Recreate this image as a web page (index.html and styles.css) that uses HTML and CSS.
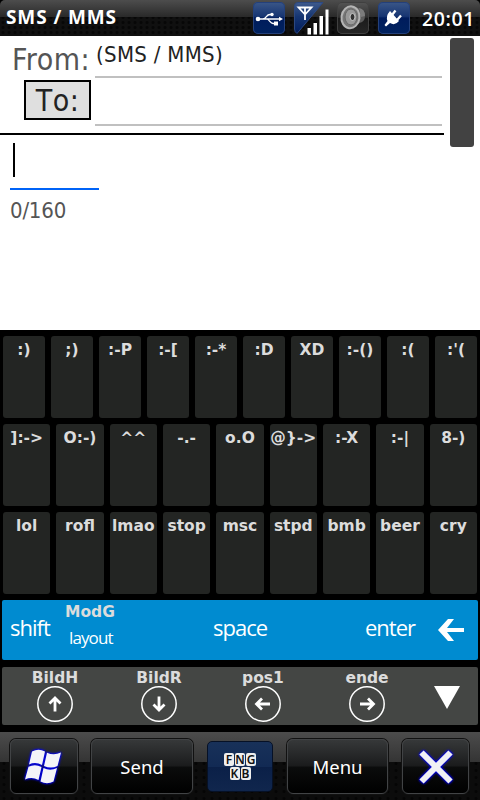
FILE: index.html
```html
<!DOCTYPE html>
<html lang="en">
<head>
  <meta charset="utf-8">
  <title>SMS / MMS</title>
  <link rel="stylesheet" href="styles.css">
</head>
<body>
  <header class="status">
    <h1>SMS / MMS</h1>
    <div class="tray">
      <div class="tile">
        <svg width="32" height="32" viewBox="0 0 32 32" fill="none" stroke="#fff" stroke-width="1.3">
          <path d="M4 17H27M10 17C14 16 13 12.500 17 12.500H20M14 17C17 18 17 21.500 20 21.500H22"/>
          <circle cx="5" cy="17" r="2.300" fill="#fff" stroke="none"/>
          <circle cx="19" cy="12.500" r="1.700" fill="#fff" stroke="none"/>
          <path d="M21 19.500h4v4h-4zM26 14.800l4 2.200-4 2.200z" fill="#fff" stroke="none"/>
        </svg>
      </div>
      <svg class="signal" width="36" height="34" viewBox="0 0 36 34">
        <defs>
          <linearGradient id="blue" x1="0" y1="0" x2="0" y2="1">
            <stop offset="0" stop-color="#3e5a8c"/>
            <stop offset=".45" stop-color="#163672"/>
            <stop offset="1" stop-color="#001c5c"/>
          </linearGradient>
        </defs>
        <path d="M4 .5H29L3 31.500Q.5 30 .5 27V4Q.5 .5 4 .5z" fill="url(#blue)" stroke="#2c4880"/>
        <path d="M4.500 5.500H17.500L11 12.500zM11 5V18" fill="none" stroke="#fff" stroke-width="1.800"/>
        <path d="M13.500 26h3.500v6.500h-3.500zM19.500 21h3.500v11.500h-3.500zM25.500 14h3.500v18.500h-3.500zM31.500 7.500h3v25h-3z" fill="#fff"/>
      </svg>
      <div class="tile gray">
        <svg width="32" height="32" viewBox="0 0 32 32">
          <path d="M14 4L22 6Q28 7 28 14Q28 20 22 21L15 26z" fill="#5c5c5c"/>
          <path d="M22 6Q28 7 28 14L24 15Z" fill="#7c7c7c"/>
          <ellipse cx="13.500" cy="15.300" rx="9" ry="11" transform="rotate(8 13.500 15.300)" fill="#777" stroke="#b4b4b4" stroke-width="2"/>
          <ellipse cx="14" cy="15" rx="6" ry="8" fill="#999" stroke="#666"/>
          <ellipse cx="15.500" cy="15" rx="2.500" ry="3.500" fill="#333" stroke="#ccc"/>
        </svg>
      </div>
      <div class="tile">
        <svg width="32" height="32" viewBox="0 0 32 32">
          <path d="M12 9L21 19Q17 24 12 21L8 24.500L6.500 23L9.500 19Q7.500 14 12 9z" fill="#fff"/>
          <path d="M14 13L17.500 8.500M19 18L23 13.500" stroke="#fff" stroke-width="2.300"/>
        </svg>
      </div>
    </div>
    <div class="clock">20:01</div>
  </header>

  <main class="compose">
    <div class="form">
      <div class="row">
        <span class="label">From:</span>
        <span class="field">(SMS / MMS)</span>
      </div>
      <div class="row to">
        <button class="to-btn">To:</button>
        <span class="field"></span>
      </div>
      <div class="message">
        <div class="caret"></div>
      </div>
      <div class="count">0/160</div>
    </div>
    <div class="scrollbar"></div>
  </main>

  <section class="keyboard">
    <div class="keys">
      <div class="key">:)</div>
      <div class="key">;)</div>
      <div class="key">:-P</div>
      <div class="key">:-[</div>
      <div class="key">:-*</div>
      <div class="key">:D</div>
      <div class="key">XD</div>
      <div class="key">:-()</div>
      <div class="key">:(</div>
      <div class="key">:'(</div>
    </div>
    <div class="keys">
      <div class="key">]:-&gt;</div>
      <div class="key">O:-)</div>
      <div class="key">^^</div>
      <div class="key">-.-</div>
      <div class="key">o.O</div>
      <div class="key">@}-&gt;</div>
      <div class="key">:-X</div>
      <div class="key">:-|</div>
      <div class="key">8-)</div>
    </div>
    <div class="keys">
      <div class="key">lol</div>
      <div class="key">rofl</div>
      <div class="key">lmao</div>
      <div class="key">stop</div>
      <div class="key">msc</div>
      <div class="key">stpd</div>
      <div class="key">bmb</div>
      <div class="key">beer</div>
      <div class="key">cry</div>
    </div>
    <div class="bar blue">
      <span class="shift">shift</span>
      <div class="mod">
        <b>ModG</b>
        <span>layout</span>
      </div>
      <span class="space">space</span>
      <span class="enter">enter</span>
      <svg class="back" width="26" height="22" viewBox="0 0 26 22">
        <path d="M10 0H16L9 9H26V13H9L16 22H10L0 11z" fill="#fff"/>
      </svg>
    </div>
    <div class="bar nav">
      <div class="nav-key">
        <b>BildH</b>
        <svg width="36" height="36" viewBox="0 0 36 36" fill="none" stroke="#fff"><circle cx="18" cy="18" r="17.200" stroke-width="1.500"/><path d="M18 25.500V12.500M12.500 17.500L18 12L23.500 17.500" stroke-width="2.800"/></svg>
      </div>
      <div class="nav-key">
        <b>BildR</b>
        <svg width="36" height="36" viewBox="0 0 36 36" fill="none" stroke="#fff"><circle cx="18" cy="18" r="17.200" stroke-width="1.500"/><path d="M18 10.500V23.500M12.500 18.500L18 24L23.500 18.500" stroke-width="2.800"/></svg>
      </div>
      <div class="nav-key">
        <b>pos1</b>
        <svg width="36" height="36" viewBox="0 0 36 36" fill="none" stroke="#fff"><circle cx="18" cy="18" r="17.200" stroke-width="1.500"/><path d="M25 18H12M17 12.500L11.500 18L17 23.500" stroke-width="2.800"/></svg>
      </div>
      <div class="nav-key">
        <b>ende</b>
        <svg width="36" height="36" viewBox="0 0 36 36" fill="none" stroke="#fff"><circle cx="18" cy="18" r="17.200" stroke-width="1.500"/><path d="M11 18H24M19 12.500L24.500 18L19 23.500" stroke-width="2.800"/></svg>
      </div>
      <svg class="hide" width="26" height="23" viewBox="0 0 26 23"><path d="M0 0H26L13 23z" fill="#fff"/></svg>
    </div>
  </section>

  <footer class="menubar">
    <button class="soft start">
      <svg width="48" height="44" viewBox="0 0 48 44">
        <path d="M12 6.500Q18.500 3 25 6.500L22 20Q15.500 16.500 9 19.500zM27 7.800Q34 11 41 7.500L37.500 21Q31 24 24 21zM8.500 21.800Q15 18.500 21.500 22L18.500 35Q12 31.500 5 34.500zM23.500 23Q30 26.500 37 23L33.500 36.500Q27 40 20.500 36.500z" fill="#f4f4f8"/>
      </svg>
    </button>
    <button class="soft send">Send</button>
    <button class="sip">
      <span><i>F</i><i>N</i><i>G</i></span>
      <span><i>K</i><i>B</i></span>
    </button>
    <button class="soft menu">Menu</button>
    <button class="soft close">
      <svg width="44" height="44" viewBox="0 0 44 44"><path d="M7.500 7.500L36.500 36.500M36.500 7.500L7.500 36.500" stroke="#f0f0f4" stroke-width="6"/></svg>
    </button>
  </footer>
</body>
</html>
```
FILE: styles.css
```css
* {
  box-sizing: border-box;
}
body {
  margin: 0;
  width: 480px;
  height: 800px;
  display: flex;
  flex-direction: column;
  background: #000;
  font-family: "DejaVu Sans Condensed", "DejaVu Sans", sans-serif;
  font-stretch: condensed;
  overflow: hidden;
}
svg {
  display: block;
}
button {
  margin: 0;
  padding: 0;
  font: inherit;
}

/* top bar */
.status {
  height: 36px;
  display: flex;
  align-items: flex-start;
  padding-left: 6px;
  color: #fff;
  font-family: "Open Sans", sans-serif;
  font-stretch: normal;
  background:
    linear-gradient(#4d4d4d, #292929 17px, transparent 17px),
    radial-gradient(circle, #070707 1px, #101010 2px) 0 0 / 6px 5px;
  border-radius: 5px 5px 0 0;
}
.status h1 {
  margin: 0;
  width: 247px;
  font-size: 19px;
  line-height: 35px;
  letter-spacing: 0.9px;
  font-weight: bold;
}
.tray {
  display: flex;
  gap: 9px;
  padding-top: 2px;
}
.tile {
  width: 32px;
  height: 32px;
  border-radius: 5px;
  background: linear-gradient(#3b5788, #173572 45%, #001c5c 50%, #00225f);
  box-shadow: inset 0 0 0 1px #24407a;
}
.tile.gray {
  background: linear-gradient(#565656, #303030 48%, #1b1b1b 50%, #262626);
  box-shadow: inset 0 0 0 1px #404040;
  margin-left: -2px;
}
.clock {
  margin-left: 12px;
  font-size: 19.5px;
  line-height: 37px;
  font-weight: 600;
  letter-spacing: 0.6px;
}

/* message form */
.compose {
  height: 294px;
  display: flex;
  background: #fff;
}
.form {
  width: 444px;
}
.row {
  display: flex;
  justify-content: space-between;
  height: 42px;
  padding: 0 2px 0 12px;
}
.row.to {
  height: 57px;
  padding-left: 24px;
  padding-top: 2px;
  border-bottom: 2px solid #000;
}
.label {
  font-size: 30px;
  line-height: 47px;
  letter-spacing: 0.5px;
  color: #555;
}
.field {
  width: 347px;
  padding-left: 1px;
  font-size: 22px;
  line-height: 38px;
  letter-spacing: 0.3px;
  color: #222;
  border-bottom: 2px solid #c0c0c0;
}
.to .field {
  height: 46px;
}
.to-btn {
  width: 67px;
  height: 40px;
  border: 2px solid #000;
  background: #dfdfdf;
  color: #222;
  font-size: 30px;
  line-height: 38px;
  letter-spacing: 0.5px;
  font-kerning: none;
}
.message {
  width: 89px;
  height: 55px;
  margin-left: 10px;
  padding: 8px 3px;
  border-bottom: 2px solid #0063f7;
}
.caret {
  width: 2px;
  height: 34px;
  background: #000;
}
.count {
  margin-left: 10px;
  font-size: 22px;
  line-height: 42px;
  letter-spacing: -0.2px;
  color: #555;
}
.scrollbar {
  width: 24px;
  height: 109px;
  margin: 2px 0 0 6px;
  border-radius: 3px;
  background: #424242;
}

/* keyboard */
.keyboard {
  height: 402px;
  padding: 6px 2px 0;
  color: #dcdcdc;
  font-family: "DejaVu Sans", sans-serif;
  font-stretch: normal;
  font-size: 15.5px;
  font-weight: bold;
}
.keys {
  display: flex;
  gap: 6px;
  height: 82px;
  margin: 0 1px 6px;
}
.key {
  flex: 1 1 0;
  min-width: 0;
  display: flex;
  justify-content: center;
  border-radius: 3px;
  background: #232523;
  line-height: 29px;
  white-space: nowrap;
}
.bar {
  display: flex;
  border-radius: 2px;
}
.bar b {
  display: block;
}
.blue {
  height: 60px;
  margin-bottom: 7px;
  background: #008bd0;
}
.blue span {
  color: #fff;
  font-family: "Open Sans", sans-serif;
  font-weight: normal;
  font-size: 22px;
  line-height: 55px;
  letter-spacing: -1px;
}
.shift {
  width: 55px;
  padding-left: 8px;
}
.mod {
  width: 148px;
  padding-left: 8px;
}
.mod b {
  line-height: 25px;
}
.bar .mod span {
  display: block;
  padding-left: 4px;
  font-size: 17px;
  line-height: 26px;
  letter-spacing: -0.9px;
}
.space {
  width: 160px;
  padding-left: 8px;
}
.enter {
  width: 73px;
}
.back {
  margin-top: 19px;
}
.nav {
  height: 58px;
  background: #444644;
}
.nav-key {
  width: 104px;
  display: flex;
  flex-direction: column;
  align-items: center;
}
.nav-key:first-child {
  margin-left: 1px;
}
.nav-key b {
  height: 19px;
  line-height: 23px;
}
.hide {
  margin: 19px 0 0 15px;
}

/* soft key bar */
.menubar {
  height: 68px;
  display: flex;
  align-items: flex-start;
  padding: 7px 10px 0;
  background:
    linear-gradient(#4c4c4c, #343434 30px, transparent 30px),
    radial-gradient(circle, #050505 1px, #0c0c0c 2px) 0 0 / 8px 7px;
}
.soft {
  height: 55px;
  display: flex;
  align-items: center;
  justify-content: center;
  border: 1px solid #414345;
  border-radius: 6px;
  background: linear-gradient(#363839, #1b1c1d 48%, #0b0c0c 52%, #000);
  box-shadow: 0 0 0 1px #111;
  color: #fff;
  font-family: "Noto Sans", sans-serif;
  font-stretch: normal;
  font-size: 18.5px;
}
.soft svg {
  filter: drop-shadow(0 0 1px #00f) drop-shadow(0 0 1px #00f);
}
.start {
  width: 68px;
}
.send {
  width: 102px;
  margin-left: 13px;
}
.sip {
  width: 66px;
  height: 51px;
  margin: 2px 14px 0;
  display: flex;
  flex-direction: column;
  align-items: center;
  justify-content: center;
  gap: 1px;
  border: 1px solid #061126;
  border-radius: 5px;
  background: linear-gradient(#183159, #122a54 50%, #0b2048 51%, #10264d);
}
.sip span {
  display: flex;
  gap: 1px;
}
.sip i {
  width: 10px;
  height: 13px;
  border-radius: 2px;
  background: #eee;
  color: #111;
  font: 600 12px/13px "Noto Sans", sans-serif;
  text-align: center;
}
.menu {
  width: 101px;
}
.close {
  width: 67px;
  margin-left: 14px;
}
```
